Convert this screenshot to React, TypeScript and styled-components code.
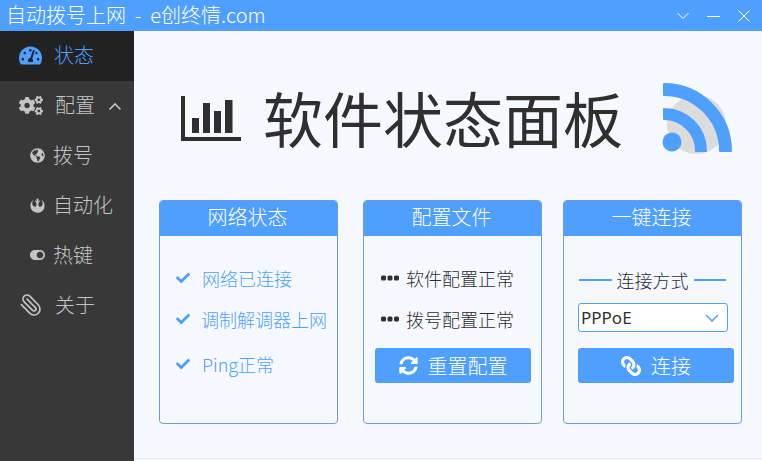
import React from "react";
import styled, { createGlobalStyle } from "styled-components";
import { FaTachometerAlt, FaCogs, FaGlobeAmericas, FaRebel, FaToggleOn, FaCheck, FaSyncAlt, FaLink } from "react-icons/fa";
import { Paperclip } from "lucide-react";

const Global = createGlobalStyle`
  html, body { margin: 0; padding: 0; width: 762px; height: 461px; overflow: hidden; background: #f5f9ff; }
  * { box-sizing: border-box; }
  body { font-family: "Noto Sans CJK SC", "Noto Sans", sans-serif; font-weight: 300; }
`;
const Win = styled.div`width:762px;height:461px;display:flex;flex-direction:column;`;
const TitleBar = styled.header`height:31px;flex:none;background:#4f9fff;color:#fff;display:flex;align-items:center;padding:0 12px 2px 6px;font-size:20px;line-height:26px;`;
const TitleText = styled.span`flex:1;white-space:pre;`;
const WinBtns = styled.div`display:flex;gap:18px;align-items:center;padding-top:2px;`;
const Body = styled.div`flex:1;display:flex;min-height:0;`;
const Side = styled.nav`width:134px;flex:none;background:#383838;display:flex;flex-direction:column;`;
const Item = styled.div<{ $active?: boolean; $sub?: boolean }>`
  height:50px;display:flex;align-items:center;font-size:20px;line-height:26px;padding-bottom:2px;
  padding-left:${p => (p.$sub ? 30 : 19)}px;
  gap:${p => (p.$sub ? 8 : 12)}px;
  color:${p => (p.$active ? "#4f9fff" : "#c4c4c4")};
  background:${p => (p.$active ? "#222222" : "transparent")};
`;
const IconSlot = styled.span<{ $w: number }>`width:${p => p.$w}px;display:flex;justify-content:center;flex:none;`;
const Clip = styled(Paperclip)`transform:scaleX(-1);`;
const Caret = styled.svg`margin:2px 0 0 1px;`;
const Main = styled.main`flex:1;display:flex;flex-direction:column;padding-left:25px;margin-bottom:2px;border-bottom:1px solid #e6e9ee;`;
const Header = styled.div`height:120px;margin-top:26px;flex:none;display:flex;align-items:center;padding-left:22px;color:#2f2f2f;`;
const Chart = styled.svg`flex:none;margin-top:3px;`;
const Heading = styled.h1`margin:0 0 0 22px;font-size:60px;font-weight:400;line-height:80px;color:#2f2f2f;white-space:nowrap;flex:1;`;
const Rss = styled.svg`margin-right:28px;flex:none;`;
const Cards = styled.div`display:flex;margin-top:23px;`;
const Card = styled.section<{ $mr: number }>`width:179px;height:224px;margin-right:${p => p.$mr}px;border:1px solid #6b9be0;border-radius:4px;overflow:hidden;display:flex;flex-direction:column;`;
const CardHead = styled.div`height:35px;flex:none;background:#4f9fff;color:#fff;font-size:20px;line-height:32px;text-align:center;padding-right:2px;`;
const CardBody = styled.div`flex:1;display:flex;flex-direction:column;`;
const Row = styled.div<{ $top: number; $blue?: boolean; $left: number; $gap: number }>`
  height:24px;display:flex;align-items:center;margin-top:${p => p.$top}px;padding-left:${p => p.$left}px;gap:${p => p.$gap}px;
  font-size:18px;white-space:nowrap;color:${p => (p.$blue ? "#4f9fff" : "#2f2f2f")};
`;
const Dots = styled.svg`flex:none;`;
const Legend = styled.div`margin:32px 15px 0;height:24px;display:flex;align-items:center;gap:5px;font-size:18px;color:#2f2f2f;white-space:nowrap;`;
const Rule = styled.span`flex:1;height:2px;background:#4f9fff;`;
const Select = styled.div`margin:11px 13px 0 14px;height:29px;background:#fff;border:1px solid #4f9fff;border-radius:3px;display:flex;align-items:center;justify-content:space-between;padding:0 8px 0 2px;font-size:17px;color:#2f2f2f;font-family:"Noto Sans",sans-serif;font-weight:400;`;
const Btn = styled.div<{ $mt: number; $ml: number }>`margin:${p => p.$mt}px 0 0 ${p => p.$ml}px;width:156px;height:35px;background:#4f9fff;color:#fff;border-radius:3px;display:flex;align-items:center;justify-content:center;gap:10px;font-size:20px;line-height:26px;`;
const ChainIcon = styled(FaLink)`transform:scaleX(-1);`;

const ThreeDots = () => (
  <Dots width="18" height="6" viewBox="0 0 18 6" fill="#2f2f2f"><rect y=".5" width="5" height="5" rx="1.500" /><rect x="6.500" y=".5" width="5" height="5" rx="1.500" /><rect x="13" y=".5" width="5" height="5" rx="1.500" /></Dots>
);

export default function App() {
  return (
    <Win>
      <Global />
      <TitleBar>
        <TitleText>自动拨号上网  -  e创终情.com</TitleText>
        <WinBtns>
          <svg width="12" height="8" viewBox="0 0 12 8" fill="none" stroke="#fff"><path d="M.5 1l5.500 5.500L11.500 1" /></svg>
          <svg width="13" height="10" viewBox="0 0 13 10" fill="none" stroke="#fff"><path d="M0 5.500h13" /></svg>
          <svg width="12" height="12" viewBox="0 0 12 12" fill="none" stroke="#fff"><path d="M.5.5l11 11M11.500.5l-11 11" /></svg>
        </WinBtns>
      </TitleBar>
      <Body>
        <Side>
          <Item $active><IconSlot $w={23}><FaTachometerAlt size={23} /></IconSlot>状态</Item>
          <Item><IconSlot $w={24}><FaCogs size={25} /></IconSlot>配置<Caret width="14" height="9" viewBox="0 0 14 9" fill="none" stroke="#c4c4c4" strokeWidth="1.6"><path d="M1.500 7.500L7 2l5.500 5.500" /></Caret></Item>
          <Item $sub><IconSlot $w={15}><FaGlobeAmericas size={15} /></IconSlot>拨号</Item>
          <Item $sub><IconSlot $w={15}><FaRebel size={17} /></IconSlot>自动化</Item>
          <Item $sub><IconSlot $w={15}><FaToggleOn size={20} /></IconSlot>热键</Item>
          <Item><IconSlot $w={24}><Clip size={26} strokeWidth={1.7} /></IconSlot>关于</Item>
        </Side>
        <Main>
          <Header>
            <Chart width="60" height="45" viewBox="0 0 60 45" fill="#2f2f2f"><path d="M0 0h4v41h56v4H0z" /><path d="M11 22h7v15h-7zM22 7h7v30h-7zM33 15h7v22h-7zM44 4h7.500v33H44z" /></Chart>
            <Heading>软件状态面板</Heading>
            <Rss width="74" height="74" viewBox="0 0 74 74">
              <circle cx="36.500" cy="44.500" r="29.500" fill="#dcdcdc" />
              <g fill="#4f9fff" stroke="#4f9fff" strokeWidth="2" strokeLinejoin="round">
                <path d="M4 4A67 67 0 0 1 71 71L60 71A56 56 0 0 0 4 15Z" />
                <path d="M4 29A42 42 0 0 1 46 71L36 71A32 32 0 0 0 4 39Z" />
              </g>
              <circle cx="12" cy="62" r="9.500" fill="#4f9fff" />
            </Rss>
          </Header>
          <Cards>
            <Card $mr={25}>
              <CardHead>网络状态</CardHead>
              <CardBody>
                <Row $blue $top={30} $left={16} $gap={12}><FaCheck size={14} />网络已连接</Row>
                <Row $blue $top={17} $left={16} $gap={11}><FaCheck size={14} />调制解调器上网</Row>
                <Row $blue $top={21} $left={16} $gap={12}><FaCheck size={14} />Ping正常</Row>
              </CardBody>
            </Card>
            <Card $mr={21}>
              <CardHead>配置文件</CardHead>
              <CardBody>
                <Row $top={30} $left={17} $gap={7}><ThreeDots />软件配置正常</Row>
                <Row $top={17} $left={17} $gap={7}><ThreeDots />拨号配置正常</Row>
                <Btn $mt={17} $ml={11}><FaSyncAlt size={19} />重置配置</Btn>
              </CardBody>
            </Card>
            <Card $mr={0}>
              <CardHead>一键连接</CardHead>
              <CardBody>
                <Legend><Rule />连接方式<Rule /></Legend>
                <Select>PPPoE<svg width="14" height="8" viewBox="0 0 14 8" fill="none" stroke="#4f9fff" strokeWidth="1.500"><path d="M1 1l6 6 6-6" /></svg></Select>
                <Btn $mt={16} $ml={14}><ChainIcon size={20} />连接</Btn>
              </CardBody>
            </Card>
          </Cards>
        </Main>
      </Body>
    </Win>
  );
}
